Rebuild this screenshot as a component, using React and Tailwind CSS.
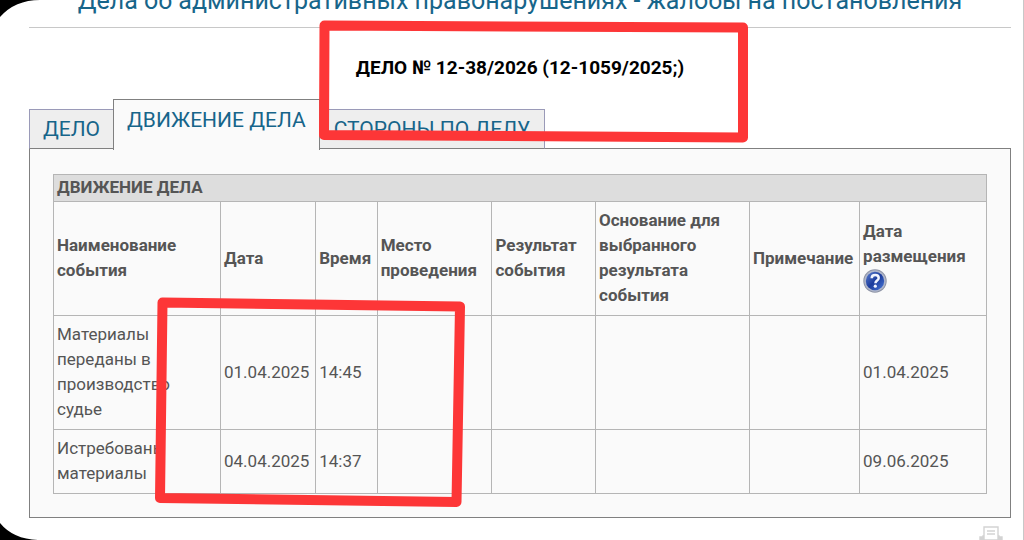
const columns = [
  { title: 'Наименование события', width: 'w-[17.9%]' },
  { title: 'Дата', width: 'w-[10.2%]' },
  { title: 'Время', width: 'w-[6.6%]' },
  { title: 'Место проведения', width: 'w-[12.3%]' },
  { title: 'Результат события', width: 'w-[11.1%]' },
  { title: 'Основание для выбранного результата события', width: 'w-[16.5%]' },
  { title: 'Примечание', width: 'w-[11.8%]' },
  { title: 'Дата размещения', width: 'w-[13.6%]', help: true },
]

const rows = [
  ['Материалы переданы в производство судье', '01.04.2025', '14:45', '', '', '', '', '01.04.2025'],
  ['Истребованы материалы', '04.04.2025', '14:37', '', '', '', '', '09.06.2025'],
]

function HelpIcon() {
  return (
    <svg viewBox="0 0 24 24" className="block h-6 w-6" aria-hidden="true">
      <defs>
        <linearGradient id="helpFill" x1="0" y1="0" x2="1" y2="1">
          <stop offset="0" stopColor="#5b7fd0" />
          <stop offset="0.5" stopColor="#1c3c9c" />
          <stop offset="1" stopColor="#4a78d8" />
        </linearGradient>
      </defs>
      <circle cx="12" cy="12" r="11.7" fill="#8e94a6" />
      <circle cx="12" cy="12" r="10.7" fill="#b0b7cb" />
      <circle cx="12" cy="12" r="9.2" fill="url(#helpFill)" />
      <path d="M8.7 9.3c0-2 1.4-3.2 3.5-3.2s3.5 1.2 3.5 2.9c0 2.5-3.3 2.6-3.3 5.2" fill="none" stroke="#f2f5ff" strokeWidth="2.5" />
      <circle cx="12.3" cy="17.2" r="1.6" fill="#f2f5ff" />
    </svg>
  )
}

function PrinterIcon() {
  return (
    <svg viewBox="0 0 24 24" className="block h-6 w-6" fill="none" stroke="#d3d3d3" strokeWidth="1.4" aria-hidden="true">
      <path d="M1 11h3v-1h16v1h3v9H1z" fill="#d3d3d3" />
      <path d="M5 14V1h14v13z" fill="#fff" />
      <path d="M8 5h8M8 8h8" />
    </svg>
  )
}

function Marks() {
  return (
    <svg className="pointer-events-none absolute left-0 top-0 h-[540px] w-[1024px]" viewBox="0 0 1024 540" aria-hidden="true">
      <g fill="none" stroke="#fd3637" strokeWidth="10" strokeLinejoin="round">
        <path d="M324.5 25.5L743 27.5V137.5L324 135z" />
        <path d="M162.5 302.5L460 306.5L456.5 502L160 498z" />
      </g>
    </svg>
  )
}

function App() {
  return (
    <div className="relative h-screen overflow-hidden border-r border-[#c8c8c8] bg-white pl-[29px] pr-3 font-['Roboto',sans-serif]">
      <h1 className="-mt-[15px] border-b border-[#c8c8c8] pb-[10px] text-center text-[25px] leading-8 text-[#17658a]">
        Дела об административных правонарушениях - жалобы на постановления
      </h1>

      <h2 className="mt-7 text-center text-[19px] font-bold leading-6 text-black">
        ДЕЛО № 12-38/2026 (12-1059/2025;)
      </h2>

      <nav className="mt-[19px] flex items-end text-[21px] text-[#17658a]">
        <a href="#case" className="h-10 border border-r-0 border-x-[#9a9ab8] border-t-[#9a9ab8] border-b-[#808080] bg-[#eeeeee] px-[13px] leading-[38px]">
          ДЕЛО
        </a>
        <a href="#movement" className="relative -mb-px h-[51px] border border-b-0 border-[#808080] bg-[#fafafa] px-[13px] leading-10">
          ДВИЖЕНИЕ ДЕЛА
        </a>
        <a href="#parties" className="h-10 border border-l-0 border-x-[#9a9ab8] border-t-[#9a9ab8] border-b-[#808080] bg-[#eeeeee] px-[14px] leading-[38px]">
          СТОРОНЫ ПО ДЕЛУ
        </a>
      </nav>

      <main className="-mt-px border border-[#808080] bg-[#fafafa] px-[23px] pb-[23px] pt-[25px]">
        <table className="w-full table-fixed border-collapse text-left text-[17px] leading-[25px] text-[#555555]">
          <colgroup>
            {columns.map((col) => (
              <col key={col.title} className={col.width} />
            ))}
          </colgroup>
          <thead>
            <tr>
              <th colSpan={8} className="border border-[#b5b5b5] bg-[#dddddd] px-[3px] pb-px font-bold">
                ДВИЖЕНИЕ ДЕЛА
              </th>
            </tr>
            <tr>
              {columns.map((col) => (
                <th key={col.title} className="border border-[#b5b5b5] px-[3px] pb-[7px] pt-[6px] font-bold">
                  {col.title}
                  {col.help && (
                    <button type="button" aria-label="Справка" className="block pb-[5px]">
                      <HelpIcon />
                    </button>
                  )}
                </th>
              ))}
            </tr>
          </thead>
          <tbody>
            {rows.map((row) => (
              <tr key={row[0]}>
                {row.map((cell, i) => (
                  <td key={i} className="border border-[#b5b5b5] px-[3px] pb-[7px] pt-[6px]">
                    <div className={i === 0 ? 'max-w-[120px]' : ''}>{cell}</div>
                  </td>
                ))}
              </tr>
            ))}
          </tbody>
        </table>
      </main>

      <div className="mt-2 flex justify-end pr-2">
        <button type="button" aria-label="Печать">
          <PrinterIcon />
        </button>
      </div>

      <Marks />

      {/* rounded screen corners */}
      <svg className="absolute left-0 top-0 h-5 w-10" viewBox="0 0 40 20" aria-hidden="true">
        <path d="M0 0H40Q15 0 0 17z" />
      </svg>
      <svg className="absolute bottom-0 left-0 h-5 w-10" viewBox="0 0 40 20" aria-hidden="true">
        <path d="M0 20H38Q13 19 0 3z" />
      </svg>
    </div>
  )
}

export default App
